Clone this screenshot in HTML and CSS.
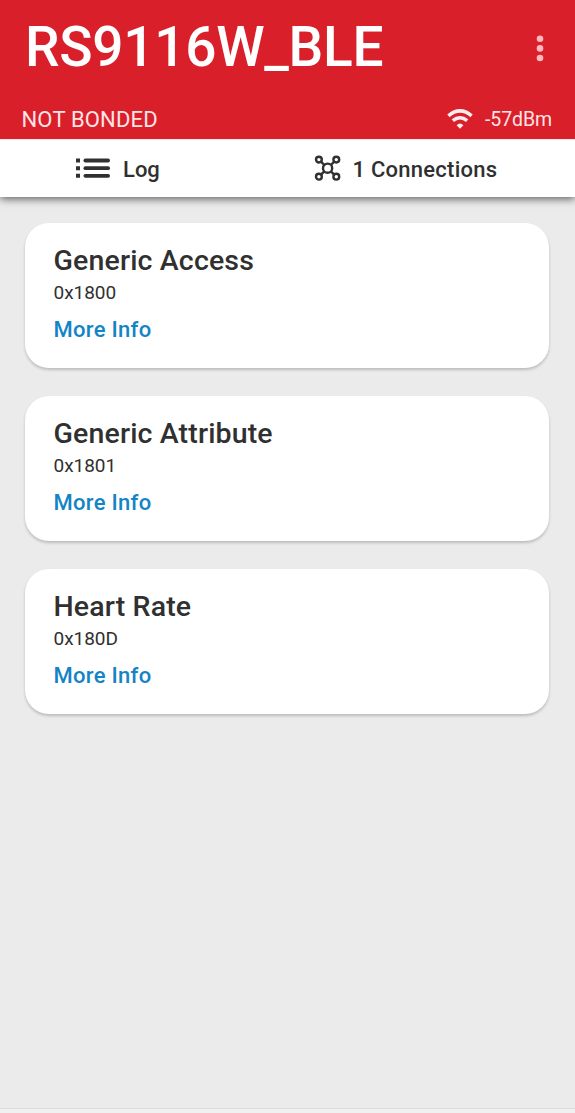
FILE: index.html
```html
<!DOCTYPE html>
<html lang="en">
<head>
<meta charset="utf-8">
<title>RS9116W_BLE</title>
<link rel="stylesheet" href="styles.css">
</head>
<body>
<div class="app">
  <header class="header">
    <div class="title-row">
      <h1 class="title">RS9116W_BLE</h1>
      <svg class="more" width="10" height="30" viewBox="0 0 10 30" fill="#ffb9bd"><circle cx="5" cy="5.8" r="3.3"/><circle cx="5" cy="15.4" r="3.3"/><circle cx="5" cy="25" r="3.3"/></svg>
    </div>
    <div class="status-row">
      <span class="bond">NOT BONDED</span>
      <svg class="wifi" width="26" height="22" viewBox="0 0 26 22" fill="none" stroke="#ffeced" stroke-width="3.5"><path d="M1.4 7.8Q13 -2 24.6 7.8"/><path d="M5.8 12.7Q13 6.7 20.2 12.7"/><path d="M13 20.8L9.6 17.2Q13 14 16.4 17.2Z" fill="#ffeced" stroke="none"/></svg>
      <span class="signal">-57dBm</span>
    </div>
  </header>
  <nav class="tabs">
    <div class="tab tab-log">
      <svg width="36" height="22" viewBox="0 0 36 22" fill="#303030"><path d="M1 .5h4v4H1zM1 8.2h4v4H1zM1 15.8h4v4H1z"/><rect x="8.5" y=".6" width="26.5" height="3.8" rx="1.9"/><rect x="8.5" y="8.3" width="26.5" height="3.8" rx="1.9"/><rect x="8.5" y="15.9" width="26.5" height="3.8" rx="1.9"/></svg>
      <span class="log-label">Log</span>
    </div>
    <div class="tab tab-connections">
      <svg width="28" height="28" viewBox="0 0 28 28" fill="none" stroke="#303030" stroke-width="2.4"><circle cx="13.6" cy="13.2" r="4.6"/><circle cx="4.9" cy="4.6" r="2.9"/><circle cx="22.3" cy="4.6" r="2.9"/><circle cx="4.9" cy="21.7" r="2.9"/><circle cx="22.3" cy="21.7" r="2.9"/><path d="M7 6.7L10.3 10M20.2 6.7L16.9 10M7 19.6L10.3 16.4M20.2 19.6L16.9 16.4"/></svg>
      <span class="connections-label">1 Connections</span>
    </div>
  </nav>
  <main class="services">
    <section class="card"><h2 class="name">Generic Access</h2><p class="uuid">0x1800</p><a class="info">More Info</a></section>
    <section class="card"><h2 class="name">Generic Attribute</h2><p class="uuid">0x1801</p><a class="info">More Info</a></section>
    <section class="card"><h2 class="name">Heart Rate</h2><p class="uuid">0x180D</p><a class="info">More Info</a></section>
  </main>
  <footer class="bottom-edge"></footer>
</div>
</body>
</html>
```

FILE: styles.css
```css
* { box-sizing: border-box; margin: 0; padding: 0; }
body { font-family: Roboto, "Liberation Sans", sans-serif; color: #303030; background: #ebebeb; }
.app { display: flex; flex-direction: column; height: 1113px; overflow: hidden; white-space: nowrap; }
svg { display: block; flex: none; }

.header { position: relative; z-index: 2; height: 139px; background: #d91f2a; color: #fff; }
.title-row { display: flex; justify-content: space-between; align-items: center; height: 95px; padding: 0 30px 0 25px; }
.title { font-size: 55px; font-weight: 500; line-height: 64px; letter-spacing: -.3px; padding-bottom: 2px; }
.status-row { display: flex; align-items: center; height: 48px; padding: 0 23px 0 21.5px; color: #ffe4e6; }
.bond { font-size: 22px; line-height: 28px; letter-spacing: .18px; padding-top: 2px; }
.wifi { margin-left: auto; margin-right: 12px; }
.signal { font-size: 19.5px; line-height: 28px; letter-spacing: -.1px; padding-top: 1px; }

.tabs { display: flex; height: 58px; background: #fff; border-top: 1px solid #ffe6e8; box-shadow: 0 2px 8px rgba(0, 0, 0, .6); position: relative; }
.tab { display: flex; align-items: center; font-size: 22px; font-weight: 500; }
.tab-log { width: 287px; padding-left: 75px; gap: 12px; }
.tab-connections { padding-left: 27px; gap: 10.5px; letter-spacing: .25px; }
.log-label, .connections-label { line-height: 28px; padding-top: 2px; }

.services { flex: 1; display: flex; flex-direction: column; gap: 27.5px; padding: 25.5px 26px 0 25px; }
.card { height: 145.5px; padding: 20.5px 28.5px 0; border-radius: 24px; background: #fff; box-shadow: 0 2px 3px rgba(0, 0, 0, .2); }
.name { font-size: 28.5px; font-weight: 500; line-height: 36px; letter-spacing: .15px; }
.uuid { font-size: 19px; line-height: 28px; letter-spacing: -.05px; }
.info { display: block; margin-top: 8px; font-size: 22px; font-weight: 500; line-height: 30px; letter-spacing: .3px; color: #1384c4; }
.bottom-edge { height: 5px; background: #f0f0f0; border-top: 1px solid #dedede; }
```
